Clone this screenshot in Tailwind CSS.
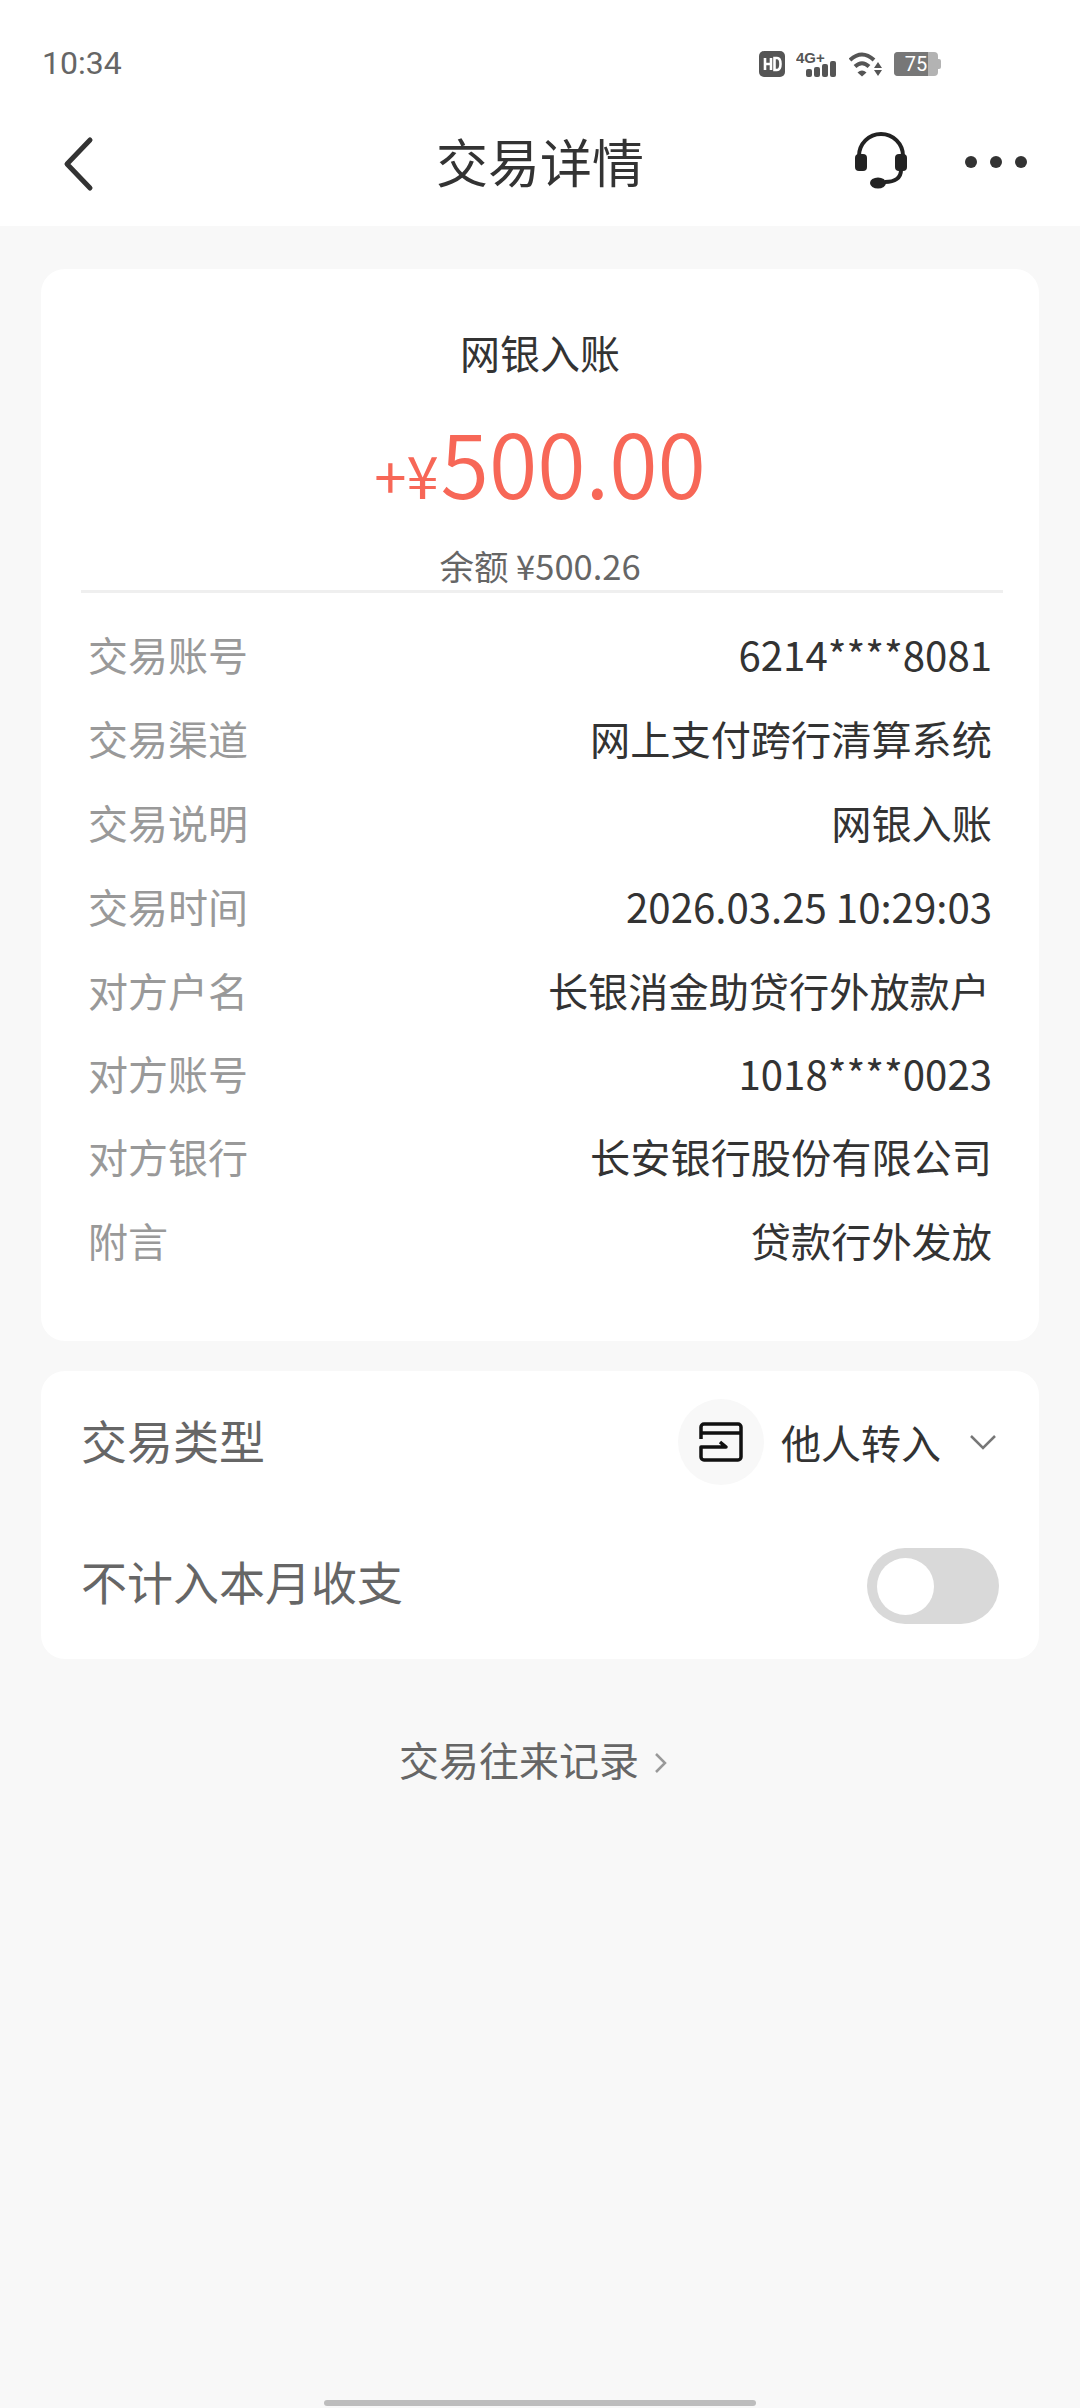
<!DOCTYPE html>
<html lang="zh-CN"><head><meta charset="utf-8">
<script src="https://cdn.jsdelivr.net/npm/@tailwindcss/browser@4"></script>
</head>
<body class="m-0">
<div class="relative w-[1080px] h-[2408px] overflow-hidden bg-[#f8f8f8] font-['Noto_Sans_CJK_SC','Noto_Sans',sans-serif] text-[#333]">
  <div class="bg-white h-[226px]">
    <div class="h-[100px] pl-[42px] pr-[139px] pt-[43px] flex items-start justify-between">
      <span class="font-['Roboto',sans-serif] text-[32px] leading-[40px] text-[#666]">10:34</span>
      <div class="flex items-center gap-[11px] h-[40px] mt-[1px]">
        <svg width="26" height="26" viewBox="0 0 26 26"><rect width="26" height="26" rx="5" fill="#555"/><path d="M6 7v12M12 7v12M6 13h6M15.500 7v12h2.500c2.500 0 3.500-2 3.500-6s-1-6-3.500-6z" stroke="#fff" stroke-width="2.600" fill="none"/></svg>
        <svg width="42" height="28" viewBox="0 0 42 28"><text x="0" y="13" font-family="Liberation Sans" font-weight="700" font-size="15" fill="#555">4G+</text><g fill="#555"><rect x="10" y="19" width="6" height="8" rx="2"/><rect x="18" y="17" width="6" height="10" rx="2"/><rect x="26" y="14" width="6" height="13" rx="2"/><rect x="34" y="11" width="6" height="16" rx="2"/></g></svg>
        <svg width="34" height="26" viewBox="0 0 34 26"><g fill="none" stroke="#555" stroke-width="4"><path d="M1 9q12-11 24 0"/><path d="M6 15.500q7-6.500 14 0"/></g><path d="M8.500 21.500q4.500-4 9 0l-4.500 4z" fill="#555"/><path d="M29 11l4 6h-8zM29 25l4-6h-8z" fill="#555"/></svg>
        <div class="flex items-center">
          <div class="relative w-[44px] h-[24px] rounded-[4px] bg-[#b3b3b3] overflow-hidden">
            <div class="w-[34px] h-full bg-[#777]"></div>
            <span class="absolute inset-0 text-center font-['Roboto',sans-serif] text-[20px] leading-[24px] text-white">75</span>
          </div>
          <div class="w-[3px] h-[10px] rounded-r-[2px] bg-[#b3b3b3]"></div>
        </div>
      </div>
    </div>
    <div class="relative h-[126px] flex items-center justify-center">
      <svg class="absolute left-[60px] top-[34px]" width="36" height="60" viewBox="0 0 36 60"><path d="M30 6L7 30l23 24" fill="none" stroke="#333" stroke-width="5" stroke-linecap="round" stroke-linejoin="round"/></svg>
      <span class="text-[52px] leading-[60px] -mt-[4px] text-[#333]">交易详情</span>
      <svg class="absolute left-[852px] top-[30px]" width="60" height="64" viewBox="0 0 60 64"><path d="M7 30V26a22 22 0 0 1 44 0v4" fill="none" stroke="#222" stroke-width="4"/><rect x="3" y="24" width="12" height="17" rx="4" fill="#222"/><rect x="43" y="24" width="12" height="17" rx="4" fill="#222"/><path d="M49 40c0 8-6 12-16 12" fill="none" stroke="#222" stroke-width="4"/><ellipse cx="26" cy="53" rx="8" ry="5.500" fill="#222"/></svg>
      <div class="absolute left-[965px] top-[56px] flex gap-[13px]"><i class="block w-[12px] h-[12px] rounded-full bg-[#333]"></i><i class="block w-[12px] h-[12px] rounded-full bg-[#333]"></i><i class="block w-[12px] h-[12px] rounded-full bg-[#333]"></i></div>
    </div>
  </div>

  <div class="mx-[41px] mt-[43px] h-[1072px] bg-white rounded-[24px] pt-[53px] px-[40px]">
    <div class="text-center text-[40px] leading-[60px] text-[#333]">网银入账</div>
    <div class="flex items-baseline justify-center h-[120px] mt-[19px] text-[#f76757]">
      <span class="text-[58px] leading-[120px]">+¥</span><span class="ml-[2px] text-[88px] leading-[120px] font-[350]">500.00</span>
    </div>
    <div class="text-center text-[34.500px] leading-[50px] text-[#666] mt-[19px]">余额 ¥500.26</div>
    <div class="h-[3px] bg-[#efefef] -mr-[4px]"></div>
    <div class="pt-[19px] px-[7px] text-[40px]">
      <div class="flex justify-between items-center h-[84px]"><span class="text-[#999]">交易账号</span><span class="text-[40.200px]">6214****8081</span></div>
      <div class="flex justify-between items-center h-[84px]"><span class="text-[#999]">交易渠道</span><span class="text-[40.200px]">网上支付跨行清算系统</span></div>
      <div class="flex justify-between items-center h-[84px]"><span class="text-[#999]">交易说明</span><span class="text-[40.200px]">网银入账</span></div>
      <div class="flex justify-between items-center h-[84px]"><span class="text-[#999]">交易时间</span><span class="text-[40.200px]">2026.03.25 10:29:03</span></div>
      <div class="flex justify-between items-center h-[84px]"><span class="text-[#999]">对方户名</span><span class="text-[40.200px] pr-[2px]">长银消金助贷行外放款户</span></div>
      <div class="flex justify-between items-center h-[82px]"><span class="text-[#999]">对方账号</span><span class="text-[40.200px]">1018****0023</span></div>
      <div class="flex justify-between items-center h-[84px]"><span class="text-[#999]">对方银行</span><span class="text-[40.200px]">长安银行股份有限公司</span></div>
      <div class="flex justify-between items-center h-[84px]"><span class="text-[#999]">附言</span><span class="text-[40.200px]">贷款行外发放</span></div>
    </div>
  </div>

  <div class="mx-[41px] mt-[30px] h-[288px] bg-white rounded-[24px] px-[40px] flex flex-col">
    <div class="flex items-center justify-between h-[142px]">
      <span class="text-[46px] text-[#666] -mt-[6px]">交易类型</span>
      <div class="flex items-center mr-[2px]">
        <div class="w-[86px] h-[86px] rounded-full bg-[#f8f8f8] flex items-center justify-center">
          <svg width="44" height="40" viewBox="0 0 44 40"><g fill="none" stroke="#111" stroke-width="3.500" stroke-linejoin="round"><path d="M2 17V5a3 3 0 0 1 3-3h34a3 3 0 0 1 3 3v30a3 3 0 0 1-3 3H5a3 3 0 0 1-3-3V25h25l-6-5M2 11h40"/></g></svg>
        </div>
        <span class="ml-[17px] text-[40px] text-[#333]">他人转入</span>
        <svg class="ml-[28px]" width="28" height="18" viewBox="0 0 28 18"><path d="M2 3l12 12L26 3" fill="none" stroke="#777" stroke-width="2.500"/></svg>
      </div>
    </div>
    <div class="flex items-center justify-between h-[146px] -mt-[4px]">
      <span class="text-[46px] text-[#666] -mt-[4px]">不计入本月收支</span>
      <div class="w-[132px] h-[76px] mt-[7px] rounded-full bg-[#d9d9d9] p-[10px]"><div class="w-[57px] h-[57px] rounded-full bg-white"></div></div>
    </div>
  </div>

  <div class="mt-[70px] pr-[12px] flex items-center justify-center h-[60px] text-[40px] text-[#666]">
    <span>交易往来记录</span>
    <svg class="ml-[14px] mt-[8px]" width="16" height="24" viewBox="0 0 16 24"><path d="M3 3l9 9-9 9" fill="none" stroke="#999" stroke-width="2.500"/></svg>
  </div>

  <div class="absolute left-[324px] bottom-[2px] w-[432px] h-[6px] rounded-full bg-[#bdbdbd]"></div>
</div>
</body></html>
